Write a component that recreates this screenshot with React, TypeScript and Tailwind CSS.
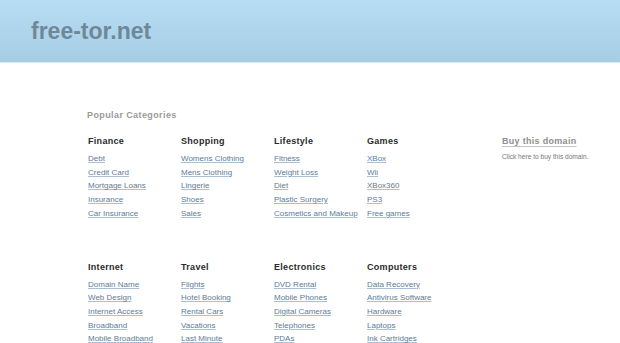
const groups = [
  [
    { title: 'Finance', links: ['Debt', 'Credit Card', 'Mortgage Loans', 'Insurance', 'Car Insurance'] },
    { title: 'Shopping', links: ['Womens Clothing', 'Mens Clothing', 'Lingerie', 'Shoes', 'Sales'] },
    { title: 'Lifestyle', links: ['Fitness', 'Weight Loss', 'Diet', 'Plastic Surgery', 'Cosmetics and Makeup'] },
    { title: 'Games', links: ['XBox', 'Wii', 'XBox360', 'PS3', 'Free games'] },
  ],
  [
    { title: 'Internet', links: ['Domain Name', 'Web Design', 'Internet Access', 'Broadband', 'Mobile Broadband'] },
    { title: 'Travel', links: ['Flights', 'Hotel Booking', 'Rental Cars', 'Vacations', 'Last Minute'] },
    { title: 'Electronics', links: ['DVD Rental', 'Mobile Phones', 'Digital Cameras', 'Telephones', 'PDAs'] },
    { title: 'Computers', links: ['Data Recovery', 'Antivirus Software', 'Hardware', 'Laptops', 'Ink Cartridges'] },
  ],
];

function Category({ title, links }: { title: string; links: string[] }) {
  return (
    <div className="w-[93px]">
      <h3 className="text-[9px] leading-[11px] font-bold tracking-[0.3px] text-[#2b2b2b]">{title}</h3>
      <ul className="mt-[5px]">
        {links.map(l => (
          <li key={l} className="text-[8px] leading-[13.7px] whitespace-nowrap">
            <a href="#" className="text-[#5b7c9c] underline decoration-[#a9bfd3] underline-offset-[1px]">
              {l}
            </a>
          </li>
        ))}
      </ul>
    </div>
  );
}

export default function App() {
  return (
    <div className="w-[620px] h-[343px] overflow-hidden bg-white font-['Liberation_Sans',Arial,sans-serif]">
      {/* Header */}
      <div className="h-[63px] bg-gradient-to-b from-[#b6ddf3] to-[#a7cde5] border-b border-[#d6ebf7]">
        <div className="pl-[31px] pt-[16px]">
          <span className="text-[23px] leading-[30px] font-bold text-[#6e8899]">free-tor.net</span>
        </div>
      </div>

      {/* Content */}
      <div className="flex pl-[87px] pt-[46px]">
        <div className="w-[415px]">
          <h2 className="text-[9px] leading-[12px] font-bold tracking-[0.4px] text-[#9a9a9a]">Popular Categories</h2>
          <div className="mt-[15px] pl-px flex flex-col gap-[41px]">
            {groups.map((row, i) => (
              <div key={i} className="flex">
                {row.map(c => (
                  <Category key={c.title} {...c} />
                ))}
              </div>
            ))}
          </div>
        </div>
        <div className="pt-[18px]">
          <a href="#" className="text-[9px] leading-[12px] font-bold tracking-[0.3px] text-[#8e8e8e] underline decoration-[#c4c4c4] underline-offset-[2px]">
            Buy this domain
          </a>
          <p className="mt-[1px] text-[6.6px] leading-[9px] text-[#777]">Click here to buy this domain.</p>
        </div>
      </div>
    </div>
  );
}
